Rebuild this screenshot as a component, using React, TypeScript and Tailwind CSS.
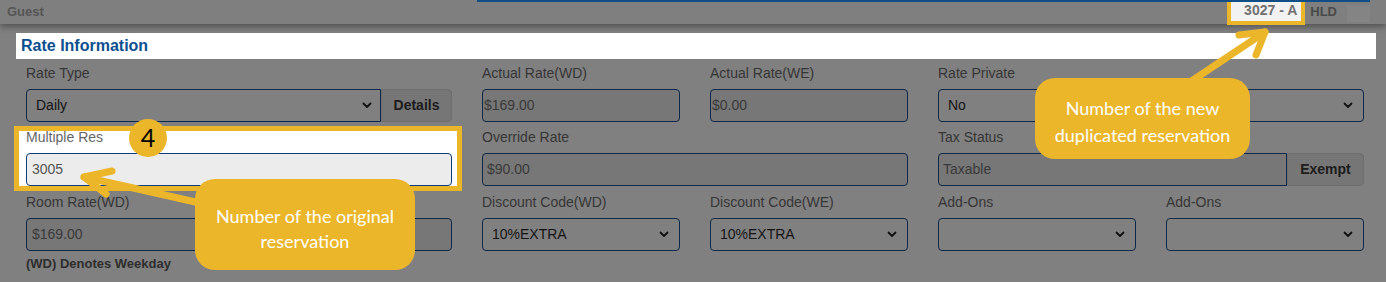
import React from 'react';

const Chevron = () => (
  <svg width="10" height="7" viewBox="0 0 10 7" className="shrink-0">
    <path d="M1.5 1.5 L5 5 L8.5 1.5" fill="none" stroke="#111" strokeWidth="1.8" strokeLinecap="round" strokeLinejoin="round" />
  </svg>
);

function Label({ children }: { children: React.ReactNode }) {
  return <div className="text-[14px] leading-[16px] mb-[8px] text-[#363636]">{children}</div>;
}

function Select({ value }: { value?: string }) {
  return (
    <div className="h-[33px] flex items-center justify-between pl-[9px] pr-[10px] border border-[#0c2747] rounded-[4px] bg-[#808080] text-[14px] text-[#141414]">
      <span>{value}</span>
      <Chevron />
    </div>
  );
}

function ReadOnly({ value, className = '' }: { value: string; className?: string }) {
  return (
    <div className={`h-[33px] flex items-center border border-[#0c2747] bg-[#777777] text-[14px] text-[#3a3a3a] ${className}`}>
      {value}
    </div>
  );
}

export default function App() {
  return (
    <div className="relative w-[1386px] h-[282px] overflow-hidden bg-[#808080]" style={{ fontFamily: '"Liberation Sans", Arial, sans-serif' }}>
      {/* Header */}
      <div className="relative h-[24px] bg-[#7f7f7f] shadow-[0_3px_6px_rgba(0,0,0,0.35)] flex items-start justify-between pl-[7px] pr-[16px]">
        <div className="absolute top-0 left-[477px] w-[893px] h-[2px] bg-[#0f4f86]" />
        <span className="mt-[2px] text-[13px] font-bold text-[#555]">Guest</span>
        <div className="flex items-start h-full">
          <div className="h-[25px] border-[4px] border-t-0 border-[#ebb62a] bg-[#f2f2f2] flex items-center justify-end pr-[4px] w-[78px] text-[14px] font-bold text-[#707070]">
            3027 - A
          </div>
          <span className="mt-[2px] ml-[5px] text-[13px] font-bold text-[#4a4a4a]">HLD</span>
          <div className="mt-[5px] ml-[10px] w-[23px] h-[17px] bg-[#848484]" />
        </div>
      </div>

      {/* Section title */}
      <div className="mt-[9px] ml-[16px] mr-[10px] h-[26px] bg-white flex items-center pl-[5px]">
        <span className="text-[16px] font-bold text-[#0b4f8f]">Rate Information</span>
      </div>

      {/* Form */}
      <div className="pl-[26px] pt-[6px] grid grid-cols-[repeat(6,198px)] gap-x-[30px] gap-y-[7px]">
        <div className="col-span-2">
          <Label>Rate Type</Label>
          <div className="flex">
            <div className="flex-1 h-[33px] flex items-center justify-between pl-[9px] pr-[8px] border border-[#0c2747] rounded-l-[4px] bg-[#808080] text-[14px] text-[#141414]">
              <span>Daily</span>
              <Chevron />
            </div>
            <div className="w-[71px] h-[33px] flex items-center justify-center bg-[#767676] border border-[#6e6e6e] rounded-r-[4px] text-[14px] font-bold text-[#1c1c1c]">
              Details
            </div>
          </div>
        </div>
        <div>
          <Label>Actual Rate(WD)</Label>
          <ReadOnly value="$169.00" className="rounded-[4px] pl-[1px]" />
        </div>
        <div>
          <Label>Actual Rate(WE)</Label>
          <ReadOnly value="$0.00" className="rounded-[4px] pl-[1px]" />
        </div>
        <div className="col-span-2">
          <Label>Rate Private</Label>
          <Select value="No" />
        </div>

        {/* Multiple Res — highlighted */}
        <div className="col-span-2 relative">
          <div className="absolute -left-[12px] -right-[10px] -top-[3px] -bottom-[5px] bg-white border-[5px] border-[#ebb62a]" />
          <div className="relative">
            <div className="text-[14px] leading-[16px] mb-[8px] text-[#666]">Multiple Res</div>
            <div className="h-[33px] flex items-center pl-[5px] border border-[#0a3d7a] rounded-[4px] bg-[#ececec] text-[14px] text-[#555]">3005</div>
          </div>
        </div>
        <div className="col-span-2">
          <Label>Override Rate</Label>
          <ReadOnly value="$90.00" className="rounded-[4px] pl-[4px]" />
        </div>
        <div className="col-span-2">
          <Label>Tax Status</Label>
          <div className="flex">
            <ReadOnly value="Taxable" className="flex-1 rounded-l-[4px] pl-[4px]" />
            <div className="w-[77px] h-[33px] flex items-center justify-center bg-[#767676] border border-[#6e6e6e] rounded-r-[4px] text-[14px] font-bold text-[#1c1c1c]">
              Exempt
            </div>
          </div>
        </div>

        <div className="col-span-2 pt-[1px]">
          <Label>Room Rate(WD)</Label>
          <ReadOnly value="$169.00" className="rounded-[4px] pl-[5px]" />
          <div className="mt-[3px] text-[13px] font-bold text-[#2e2e2e]">(WD) Denotes Weekday</div>
        </div>
        <div className="pt-[1px]">
          <Label>Discount Code(WD)</Label>
          <Select value="10%EXTRA" />
        </div>
        <div className="pt-[1px]">
          <Label>Discount Code(WE)</Label>
          <Select value="10%EXTRA" />
        </div>
        <div className="pt-[1px]">
          <Label>Add-Ons</Label>
          <Select />
        </div>
        <div className="pt-[1px]">
          <Label>Add-Ons</Label>
          <Select />
        </div>
      </div>

      {/* Annotations */}
      <svg className="absolute inset-0 pointer-events-none" width="1386" height="282">
        <g stroke="#ebb62a" strokeWidth="7" strokeLinecap="round" strokeLinejoin="round" fill="none">
          <path d="M200 203 L84 177" />
          <path d="M112 171 L84 177 L106 194" />
          <path d="M1193 80 L1265 32" />
          <path d="M1239 35 L1265 32 L1256 55" />
        </g>
      </svg>

      <div className="absolute left-[129px] top-[119px] w-[38px] h-[38px] rounded-full bg-[#ebb62a] flex items-center justify-center text-[25px] text-black" style={{ fontFamily: 'Lato, "Liberation Sans", sans-serif' }}>
        4
      </div>

      <div className="absolute left-[195px] top-[179px] w-[220px] h-[91px] pt-[8px] rounded-[20px] bg-[#ebb62a] flex items-center justify-center text-center text-white text-[18px] leading-[25px]" style={{ fontFamily: 'Lato, "Liberation Sans", sans-serif' }}>
        Number of the original
        <br />
        reservation
      </div>

      <div className="absolute left-[1035px] top-[78px] w-[215px] h-[81px] pt-[6px] rounded-[20px] bg-[#ebb62a] flex items-center justify-center text-center text-white text-[18px] leading-[27px]" style={{ fontFamily: 'Lato, "Liberation Sans", sans-serif' }}>
        Number of the new
        <br />
        duplicated reservation
      </div>
    </div>
  );
}
